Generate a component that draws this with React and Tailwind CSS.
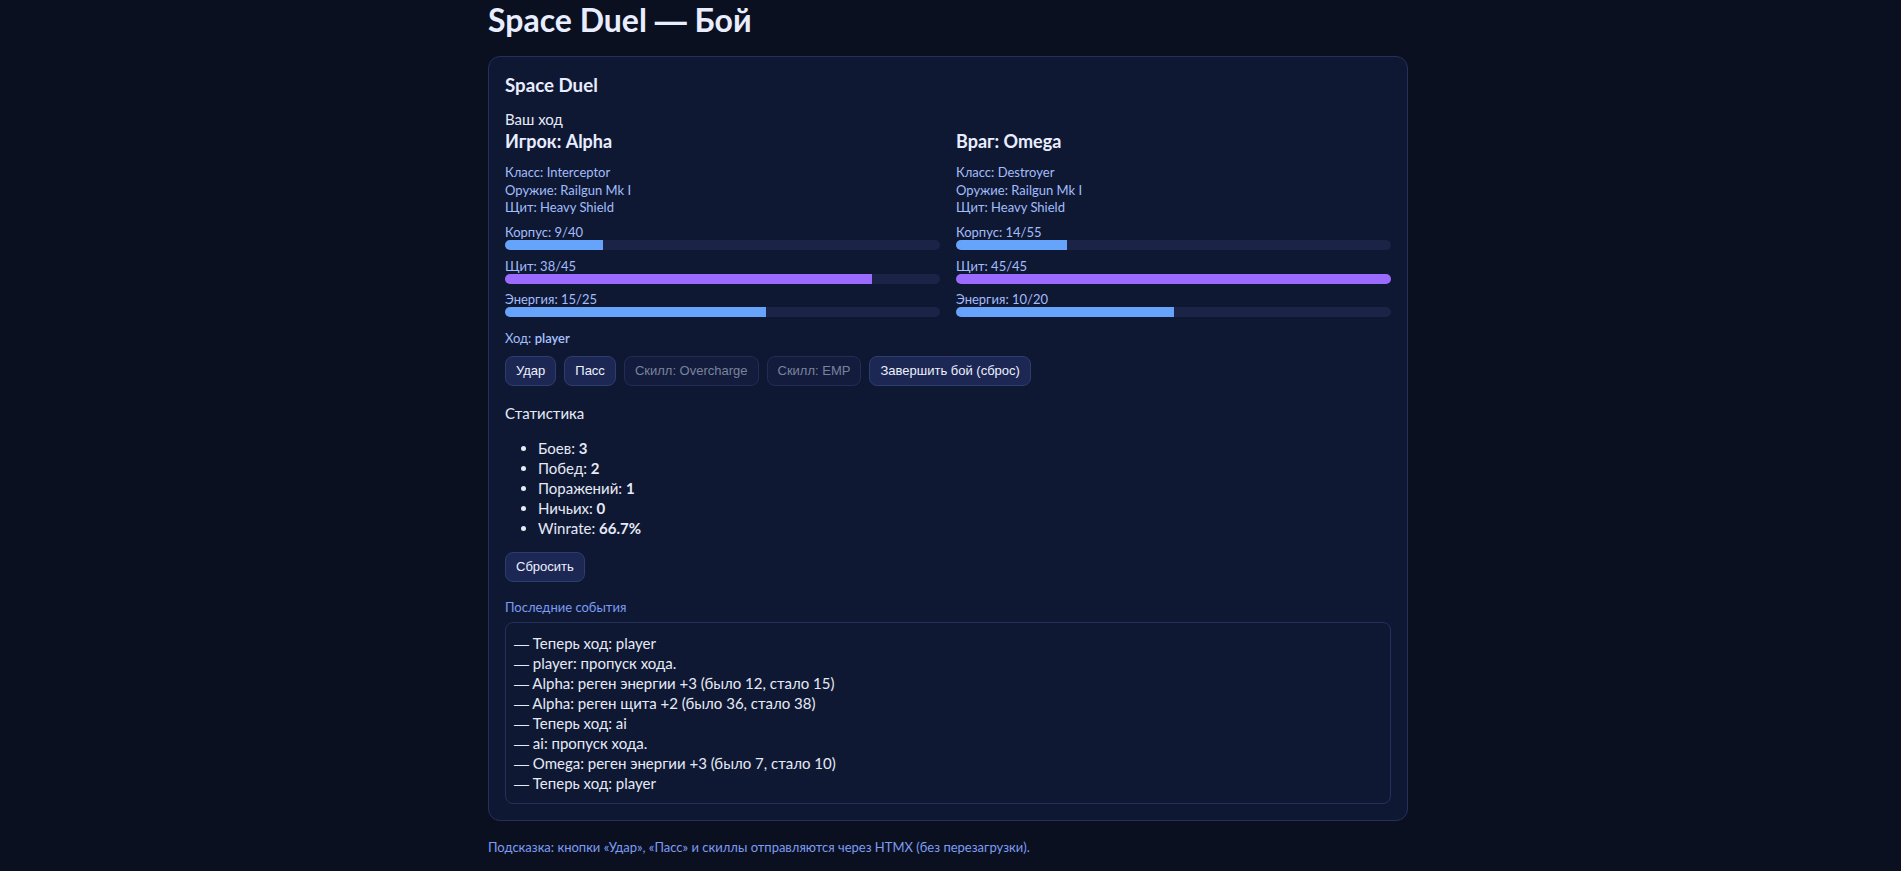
import React from "react";

const bodyFont = { fontFamily: '"Segoe UI", Lato, "Noto Sans", sans-serif' };
const dashFont = { fontFamily: '"Liberation Sans", Arial, sans-serif' };

function Dash() {
  return (
    <span className="leading-[0]" style={dashFont}>
      —
    </span>
  );
}

function Bar({ label, value, max, color }) {
  const pct = (value / max) * 100;
  return (
    <div className="flex flex-col">
      <div className="text-[13px] leading-[16px] text-[#a3bdfb]">
        {label}: {value}/{max}
      </div>
      <div className="h-[10px] w-full overflow-hidden rounded-full bg-[#1b2446]">
        <div className={`h-full ${color}`} style={{ width: `${pct}%` }} />
      </div>
    </div>
  );
}

function Ship({ title, cls, weapon, shield, hull, sh, en }) {
  return (
    <div className="flex flex-col">
      <h3 className="text-[18px] font-bold leading-[24px] text-[#e8edff]">{title}</h3>
      <div className="mt-[11px] flex flex-col gap-[7.5px]">
        <div className="text-[13px] leading-[17.5px] text-[#a3bdfb]">
          <div>Класс: {cls}</div>
          <div>Оружие: {weapon}</div>
          <div>Щит: {shield}</div>
        </div>
        <Bar label="Корпус" value={hull[0]} max={hull[1]} color="bg-[#66a3fb]" />
        <Bar label="Щит" value={sh[0]} max={sh[1]} color="bg-[#9b6bff]" />
        <Bar label="Энергия" value={en[0]} max={en[1]} color="bg-[#66a3fb]" />
      </div>
    </div>
  );
}

function Btn({ children, disabled }) {
  return (
    <button
      disabled={disabled}
      className={
        "h-[30px] rounded-lg border px-[10px] text-[13px] leading-[16px] " +
        (disabled
          ? "border-[#222c55] bg-[#131c3c] text-[#7a839c]"
          : "border-[#2e3c70] bg-[#1c2753] text-[#eef1ff]")
      }
      style={{ fontFamily: '"Liberation Sans", Arial, sans-serif' }}
    >
      {children}
    </button>
  );
}

export default function App() {
  const log = [
    "Теперь ход: player",
    "player: пропуск хода.",
    "Alpha: реген энергии +3 (было 12, стало 15)",
    "Alpha: реген щита +2 (было 36, стало 38)",
    "Теперь ход: ai",
    "ai: пропуск хода.",
    "Omega: реген энергии +3 (было 7, стало 10)",
    "Теперь ход: player",
  ];
  return (
    <div className="min-h-[871px] bg-[#0b1020] pr-[5px] text-[#e6eaf7]" style={bodyFont}>
      <div className="mx-auto w-[920px]">
        <h1 className="mb-[17px] pt-[1px] text-[32px] font-bold leading-[38px] text-[#e8edff]">
          Space Duel <Dash /> Бой
        </h1>
        <div className="rounded-xl border border-[#25305a] bg-[#0f1833] p-4">
          <h3 className="text-[18.7px] font-bold leading-[24px] text-[#e8edff]">Space Duel</h3>
          <div className="mt-[12px] text-[15px] leading-[20px]">Ваш ход</div>
          <div className="grid grid-cols-2 gap-4">
            <Ship
              title="Игрок: Alpha"
              cls="Interceptor"
              weapon="Railgun Mk I"
              shield="Heavy Shield"
              hull={[9, 40]}
              sh={[38, 45]}
              en={[15, 25]}
            />
            <Ship
              title="Враг: Omega"
              cls="Destroyer"
              weapon="Railgun Mk I"
              shield="Heavy Shield"
              hull={[14, 55]}
              sh={[45, 45]}
              en={[10, 20]}
            />
          </div>
          <div className="mt-[12.5px] text-[13px] leading-[17px] text-[#a3bdfb]">
            Ход: <span className="font-semibold text-[#a9c2fd]">player</span>
          </div>
          <div className="mt-[9.5px] flex gap-2">
            <Btn>Удар</Btn>
            <Btn>Пасс</Btn>
            <Btn disabled>Скилл: Overcharge</Btn>
            <Btn disabled>Скилл: EMP</Btn>
            <Btn>Завершить бой (сброс)</Btn>
          </div>
          <div className="mt-[17px] text-[15px] leading-[20px]">Статистика</div>
          <ul className="mt-[15px] list-disc pl-[33px] text-[15px] leading-[20px]">
            <li>
              Боев: <b>3</b>
            </li>
            <li>
              Побед: <b>2</b>
            </li>
            <li>
              Поражений: <b>1</b>
            </li>
            <li>
              Ничьих: <b>0</b>
            </li>
            <li>
              Winrate: <b>66.7%</b>
            </li>
          </ul>
          <div className="mt-[14px]">
            <Btn>Сбросить</Btn>
          </div>
          <div className="mt-[17px] text-[13px] leading-[17px] text-[#7d9cf3]">Последние события</div>
          <div className="mt-[6px] rounded-lg border border-[#25305a] px-2 py-[10px] text-[15px] leading-[20px]">
            {log.map((l, i) => (
              <div key={i} className="h-[20px]">
                <Dash /> {l}
              </div>
            ))}
          </div>
        </div>
        <div className="mt-[17.5px] text-[13px] leading-[17px] text-[#7d9cf3]">
          Подсказка: кнопки «Удар», «Пасс» и скиллы отправляются через HTMX (без перезагрузки).
        </div>
      </div>
    </div>
  );
}
